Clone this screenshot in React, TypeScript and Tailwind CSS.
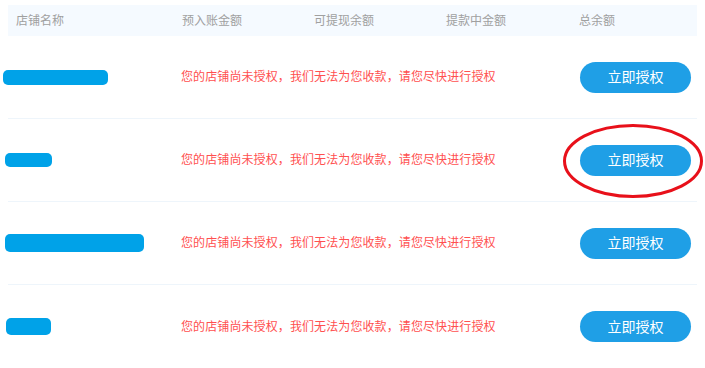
import React from "react";

const shops = [
	{ bar: "w-[105px] h-[15px] ml-[-5px]" },
	{ bar: "w-[47px] h-[14px] ml-[-3px]" },
	{ bar: "w-[139px] h-[18px] ml-[-3px]" },
	{ bar: "w-[45px] h-[17px] ml-[-2px]" },
];

const App = () => {
	return (
		<div className="w-[705px] h-[368px] bg-white overflow-hidden px-2 pt-[5px] font-['Liberation_Sans','Noto_Sans_CJK_SC',sans-serif]">
			{/* table head */}
			<div className="flex items-center h-[31px] bg-[#f5faff] text-[12px] text-[#a0a0a0]">
				<div className="w-[174px] pl-2">店铺名称</div>
				<div className="w-[132px]">预入账金额</div>
				<div className="w-[132px]">可提现余额</div>
				<div className="w-[133px]">提款中金额</div>
				<div className="flex-1">总余额</div>
			</div>

			{shops.map((shop, i) => (
				<div
					key={i}
					className={
						"relative flex items-center h-[83px] " +
						(i < 3 ? "border-b border-[#eef5fb]" : "")
					}
				>
					<div className="w-[173px]">
						<div className={"rounded-[5px] bg-[#00a2e8] " + shop.bar} />
					</div>
					<div className="w-[399px] text-[12px] text-[#ff5050] tracking-[0.1px]">
						您的店铺尚未授权，我们无法为您收款，请您尽快进行授权
					</div>
					<button className="w-[111px] h-[31px] rounded-full bg-[#1f9fe6] text-white text-[14px] leading-none">
						立即授权
					</button>
					{i === 1 && (
						<svg
							className="absolute left-[554px] top-[4px] pointer-events-none"
							width="143"
							height="76"
							viewBox="0 0 143 76"
						>
							<ellipse
								cx="71"
								cy="38"
								rx="68.5"
								ry="35.5"
								fill="none"
								stroke="#e8101a"
								strokeWidth="3"
							/>
						</svg>
					)}
				</div>
			))}
		</div>
	);
};

export default App;
